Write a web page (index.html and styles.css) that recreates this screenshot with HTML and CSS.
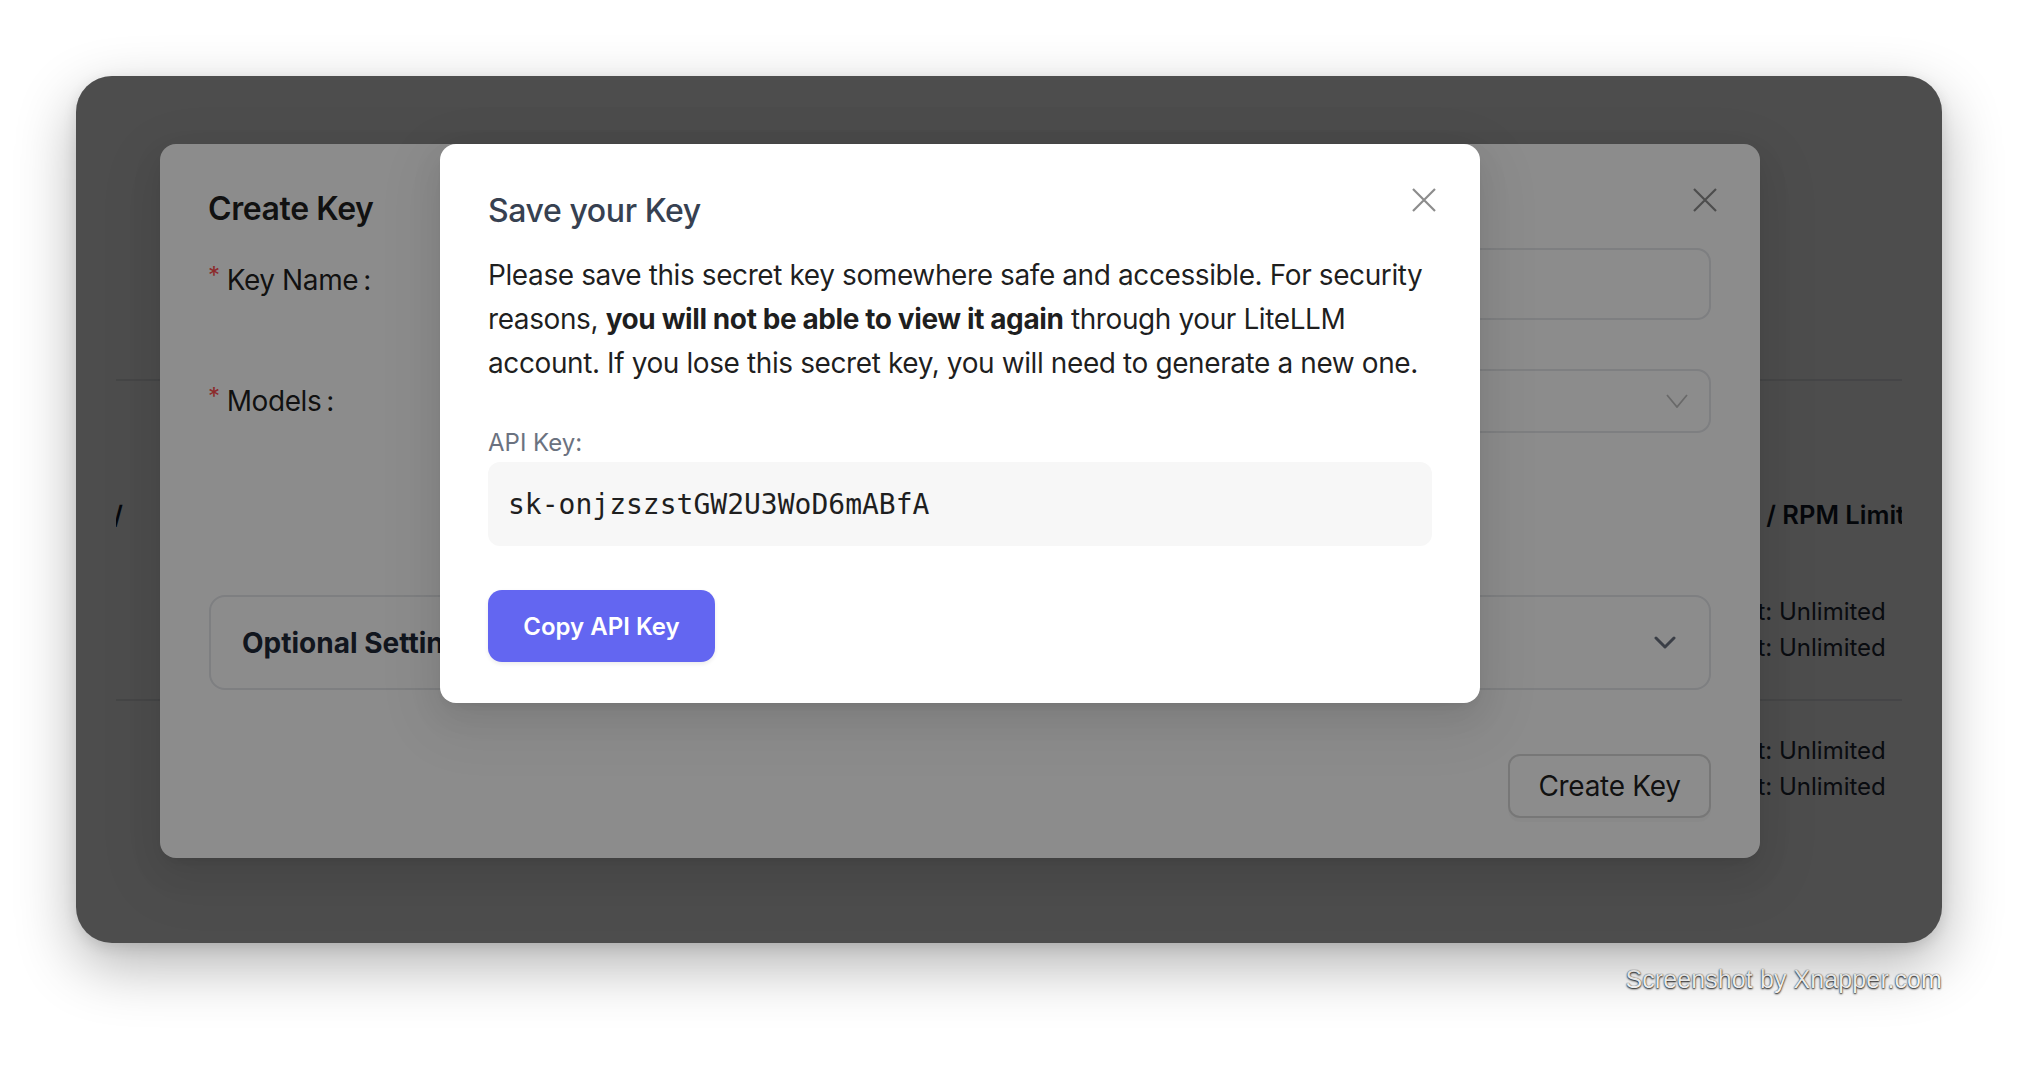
FILE: index.html
```html
<!DOCTYPE html>
<html lang="en">
<head>
<meta charset="utf-8">
<title>Save your Key</title>
<link rel="stylesheet" href="styles.css">
</head>
<body>
<div class="stage">
  <div class="window">
    <div class="page">
      <div class="table">
        <div class="thead">
          <span class="h-left">Key Alias /</span>
          <span class="h-right">TPM / RPM Limits</span>
        </div>
        <div class="trow first">
          <div class="limits">
            <div>TPM Limit: Unlimited</div>
            <div>RPM Limit: Unlimited</div>
          </div>
        </div>
        <div class="trow">
          <div class="limits">
            <div>TPM Limit: Unlimited</div>
            <div>RPM Limit: Unlimited</div>
          </div>
        </div>
      </div>
    </div>

    <div class="mask"></div>

    <div class="modal create">
      <div class="modal-title dark">Create Key</div>
      <button class="close" aria-label="Close">
        <svg width="24" height="24" viewBox="0 0 24 24"><path d="M1 1L23 23M23 1L1 23" stroke="currentColor" stroke-width="2.2" fill="none"/></svg>
      </button>
      <div class="form">
        <div class="form-row">
          <div class="label"><span class="req">*</span>Key Name<span class="colon">:</span></div>
          <div class="control"><div class="input tall"></div></div>
        </div>
        <div class="form-row models">
          <div class="label"><span class="req">*</span>Models<span class="colon">:</span></div>
          <div class="control">
            <div class="input select">
              <svg width="22" height="14" viewBox="0 0 22 14"><path d="M1 1L11 13L21 1" stroke="currentColor" stroke-width="1.8" fill="none"/></svg>
            </div>
          </div>
        </div>
        <div class="accordion">
          <span>Optional Settings</span>
          <svg width="22" height="14" viewBox="0 0 22 14"><path d="M2 2L11 11L20 2" stroke="currentColor" stroke-width="3" fill="none" stroke-linecap="round" stroke-linejoin="round"/></svg>
        </div>
        <div class="form-footer">
          <button class="btn-default">Create Key</button>
        </div>
      </div>
    </div>

    <div class="mask"></div>

    <div class="modal save">
      <div class="modal-title slate">Save your Key</div>
      <button class="close" aria-label="Close">
        <svg width="24" height="24" viewBox="0 0 24 24"><path d="M1 1L23 23M23 1L1 23" stroke="currentColor" stroke-width="2.2" fill="none"/></svg>
      </button>
      <p class="notice">Please save this secret key somewhere safe and accessible. For security<br>reasons, <strong>you will not be able to view it again</strong> through your LiteLLM<br>account. If you lose this secret key, you will need to generate a new one.</p>
      <div class="key-label">API Key:</div>
      <div class="key-box">sk-onjzszstGW2U3WoD6mABfA</div>
      <button class="btn-primary">Copy API Key</button>
    </div>
  </div>
  <div class="credit">Screenshot by Xnapper.com</div>
</div>
</body>
</html>
```

FILE: styles.css
```css
* { box-sizing: border-box; }

html, body {
  margin: 0;
  padding: 0;
  background: #ffffff;
}

body {
  font-family: Inter, "Noto Sans", sans-serif;
  color: rgba(0, 0, 0, 0.88);
}

.stage {
  padding: 76px 0 0 76px;
  width: 2018px;
  height: 1070px;
  overflow: hidden;
}

.window {
  position: relative;
  width: 1866px;
  height: 867px;
  border-radius: 36px;
  background: #ffffff;
  overflow: hidden;
  box-shadow: 0 22px 60px rgba(0, 0, 0, 0.30), 0 4px 14px rgba(0, 0, 0, 0.10);
}

/* background page */
.page {
  padding: 303px 40px 0 40px;
}

.table {
  width: 1786px;
  overflow: hidden;
  border-top: 2px solid #e5e7eb;
  font-size: 24px;
  color: #111827;
}

.thead {
  display: flex;
  padding-top: 118px;
  line-height: 32px;
  font-size: 25.5px;
  font-weight: 600;
  white-space: nowrap;
}

.h-left {
  flex: 0 0 200px;
  margin-left: -193px;
  text-align: right;
}

.h-right {
  margin-left: 1580px;
}

.trow {
  padding: 32px 0 0 1536px;
  line-height: 36px;
  color: #1f2937;
  white-space: nowrap;
}

.trow.first {
  padding-top: 63px;
  padding-bottom: 33px;
  border-bottom: 2px solid #e5e7eb;
}

/* masks */
.mask {
  position: absolute;
  inset: 0;
  background: rgba(0, 0, 0, 0.45);
}

/* modals */
.modal {
  position: absolute;
  top: 68px;
  background: #ffffff;
  border-radius: 16px;
  box-shadow: 0 12px 32px 0 rgba(0, 0, 0, 0.08), 0 6px 12px -8px rgba(0, 0, 0, 0.12), 0 18px 56px 16px rgba(0, 0, 0, 0.05);
}

.create {
  left: 84px;
  width: 1600px;
  padding: 41px 48px 40px;
}

.save {
  left: 364px;
  width: 1040px;
  padding: 43px 48px 41px;
}

.modal-title {
  font-size: 32px;
  line-height: 48px;
  letter-spacing: -0.4px;
}

.modal-title.dark {
  font-weight: 600;
  color: rgba(0, 0, 0, 0.88);
}

.modal-title.slate {
  font-weight: 500;
  color: #374151;
  margin-bottom: 18px;
}

.close {
  position: absolute;
  top: 44px;
  right: 43px;
  width: 24px;
  height: 24px;
  padding: 0;
  border: 0;
  background: transparent;
  color: rgba(0, 0, 0, 0.45);
  display: block;
}

.save .close { right: 44px; }

.close svg { display: block; }

/* form */
.form {
  margin-top: 15px;
}

.form-row {
  display: flex;
  align-items: flex-start;
}

.form-row.models {
  margin-top: 49px;
}

.label {
  flex: 0 0 501px;
  font-size: 28px;
  line-height: 64px;
  letter-spacing: -0.4px;
  white-space: nowrap;
}

.req {
  color: #ff4d4f;
  font-size: 24px;
  margin-right: 7px;
  position: relative;
  top: -6px;
}

.colon {
  margin-left: 5px;
}

.control {
  flex: 1;
  padding-right: 1px;
}

.input {
  height: 64px;
  border: 2px solid #e5e7eb;
  border-radius: 14px;
  background: #ffffff;
}

.input.tall {
  height: 72px;
}

.select {
  display: flex;
  align-items: center;
  justify-content: flex-end;
  padding-right: 21px;
  color: rgba(0, 0, 0, 0.25);
}

.select svg { display: block; }

.accordion {
  margin: 160px 1px 0 1px;
  height: 95px;
  border: 2px solid #e5e7eb;
  border-radius: 16px;
  display: flex;
  align-items: center;
  justify-content: space-between;
  padding: 0 33px 0 31px;
  font-size: 28px;
  font-weight: 700;
  color: #1f2937;
}

.accordion svg {
  display: block;
  color: #6b7280;
}

.form-footer {
  display: flex;
  justify-content: flex-end;
  margin-top: 64px;
  padding-right: 1px;
}

.btn-default {
  width: 203px;
  height: 64px;
  border: 2px solid #d9d9d9;
  border-radius: 12px;
  background: #ffffff;
  font-family: Inter, "Noto Sans", sans-serif;
  font-size: 28px;
  letter-spacing: -0.3px;
  color: rgba(0, 0, 0, 0.88);
  padding: 0;
  box-shadow: 0 4px 0 rgba(0, 0, 0, 0.02);
}

/* save modal body */
.notice {
  margin: 0;
  font-size: 28px;
  line-height: 44px;
  letter-spacing: -0.4px;
  color: rgba(0, 0, 0, 0.88);
  white-space: nowrap;
}

.notice strong {
  font-weight: 700;
}

.key-label {
  margin-top: 42px;
  font-size: 24px;
  line-height: 32px;
  color: #6b7280;
}

.key-box {
  margin-top: 3px;
  height: 84px;
  display: flex;
  align-items: center;
  padding-left: 20px;
  background: #f7f7f7;
  border-radius: 12px;
  font-family: "DejaVu Sans Mono", "Liberation Mono", monospace;
  font-size: 28px;
  color: #1f1f1f;
}

.btn-primary {
  margin-top: 44px;
  display: block;
  width: 227px;
  height: 72px;
  border: 0;
  border-radius: 14px;
  background: #6366f1;
  color: #ffffff;
  font-family: Inter, "Noto Sans", sans-serif;
  font-size: 24px;
  font-weight: 600;
  padding: 0;
  box-shadow: 0 2px 4px rgba(0, 0, 0, 0.08);
}

/* watermark */
.credit {
  width: 1866px;
  margin-top: 21px;
  text-align: right;
  font-family: "Liberation Sans", Arial, sans-serif;
  font-size: 25px;
  line-height: 30px;
  letter-spacing: 0.1px;
  color: #ffffff;
  text-shadow: 0 1px 2px rgba(0, 0, 0, 0.95), 0 0 1px rgba(0, 0, 0, 0.7);
}
```
